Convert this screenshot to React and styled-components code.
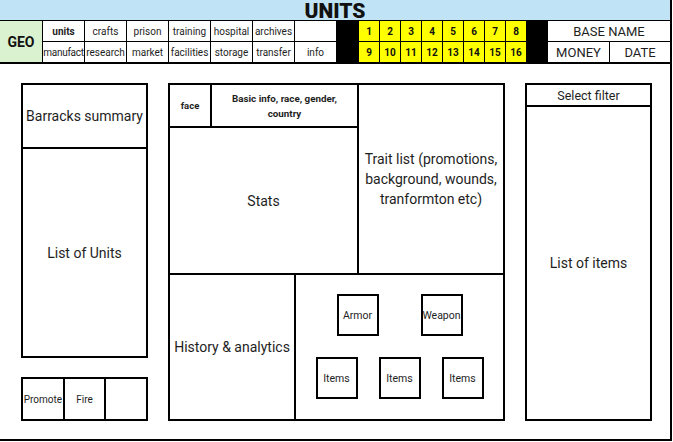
import React from "react";
import styled, { createGlobalStyle } from "styled-components";

const GlobalStyle = createGlobalStyle`
  html, body {
    margin: 0;
    padding: 0;
    background: #fff;
  }
  body {
    font-family: Roboto, "Liberation Sans", sans-serif;
    color: #1e1e1e;
  }
`;

const NAV_TOP = ["units", "crafts", "prison", "training", "hospital", "archives", ""];
const NAV_BOTTOM = ["manufact", "research", "market", "facilities", "storage", "transfer", "info"];

const App = () => {
  return (
    <>
      <GlobalStyle />
      <Sheet>
        <TitleBar>
          <Title>UNITS</Title>
        </TitleBar>

        <HeaderGrid>
          <GeoCell>GEO</GeoCell>
          {NAV_TOP.map((label, i) => (
            <NavCell key={"t" + i} $row={1} $col={i + 2} $bold={label === "units"}>
              {label}
            </NavCell>
          ))}
          {NAV_BOTTOM.map((label, i) => (
            <NavCell key={"b" + i} $row={2} $col={i + 2} $tight={label === "manufact"}>
              {label}
            </NavCell>
          ))}
          <BlackCell $col={9} />
          {Array.from({ length: 16 }, (_, i) => (
            <SlotCell key={i} $row={i < 8 ? 1 : 2} $col={10 + (i % 8)}>
              {i + 1}
            </SlotCell>
          ))}
          <BlackCell $col={18} />
          <InfoCell $row={1} $col="19 / span 2">BASE NAME</InfoCell>
          <InfoCell $row={2} $col="19">MONEY</InfoCell>
          <InfoCell $row={2} $col="20">DATE</InfoCell>
        </HeaderGrid>

        <Main>
          <LeftColumn>
            <UnitsPanel>
              <Cell $size={14}>Barracks summary</Cell>
              <Cell $size={14}>List of Units</Cell>
            </UnitsPanel>
            <ActionRow>
              <Cell $size={10}>Promote</Cell>
              <Cell $size={10}>Fire</Cell>
              <Cell />
            </ActionRow>
          </LeftColumn>

          <DetailPanel>
            <Cell $area="face" $size={9.5} $bold>face</Cell>
            <Cell $area="basic" $size={9.8} $bold $lh={15}>
              Basic info, race, gender,
              <br />
              country
            </Cell>
            <Cell $area="trait" $size={14} $lh={20}>
              Trait list (promotions,
              <br />
              background, wounds,
              <br />
              tranformton etc)
            </Cell>
            <Cell $area="stats" $size={14}>Stats</Cell>
            <Cell $area="history" $size={14}>History &amp; analytics</Cell>
            <EquipArea>
              <SlotRow $gap={42}>
                <ItemBox>Armor</ItemBox>
                <ItemBox>Weapon</ItemBox>
              </SlotRow>
              <SlotRow $gap={21}>
                <ItemBox>Items</ItemBox>
                <ItemBox>Items</ItemBox>
                <ItemBox>Items</ItemBox>
              </SlotRow>
            </EquipArea>
          </DetailPanel>

          <ItemsPanel>
            <Cell $size={12.5}>Select filter</Cell>
            <Cell $size={14}>List of items</Cell>
          </ItemsPanel>
        </Main>
      </Sheet>
    </>
  );
};

const Sheet = styled.div`
  width: 672px;
  height: 441px;
  box-sizing: border-box;
  border-right: 2px solid #000;
  border-bottom: 2px solid #000;
  display: flex;
  flex-direction: column;
  overflow: hidden;
`;

const TitleBar = styled.div`
  height: 20px;
  background: #c0e4f5;
  display: flex;
  justify-content: center;
  align-items: flex-end;
`;

const Title = styled.span`
  font-weight: 900;
  font-size: 21px;
  line-height: 17px;
  color: #111;
`;

const HeaderGrid = styled.div`
  display: grid;
  grid-template-columns: 42px repeat(7, 41px) 21px repeat(8, 20px) 20px 61px 60px;
  grid-template-rows: 20px 20px;
  gap: 1px;
  padding: 1px 0 2px;
  background: #000;
`;

const BaseCell = styled.div`
  display: flex;
  align-items: center;
  justify-content: center;
  background: #fff;
  white-space: nowrap;
  overflow: hidden;
`;

const GeoCell = styled(BaseCell)`
  grid-row: 1 / span 2;
  grid-column: 1;
  background: #daf2d0;
  font-weight: 700;
  font-size: 14px;
  color: #111;
`;

const NavCell = styled(BaseCell)`
  grid-row: ${(p) => p.$row};
  grid-column: ${(p) => p.$col};
  font-size: 10px;
  font-weight: ${(p) => (p.$bold ? 700 : 400)};
  letter-spacing: ${(p) => (p.$tight ? "-0.3px" : "normal")};
`;

const BlackCell = styled.div`
  grid-row: 1 / span 2;
  grid-column: ${(p) => p.$col};
  background: #000;
`;

const SlotCell = styled(BaseCell)`
  grid-row: ${(p) => p.$row};
  grid-column: ${(p) => p.$col};
  background: #ffff00;
  font-size: 10px;
  font-weight: 700;
  color: #111;
`;

const InfoCell = styled(BaseCell)`
  grid-row: ${(p) => p.$row};
  grid-column: ${(p) => p.$col};
  font-size: 13px;
`;

const Main = styled.div`
  flex: 1;
  display: flex;
  align-items: flex-start;
  gap: 20px;
  padding: 19px 0 0 21px;
`;

const LeftColumn = styled.div`
  width: 127px;
  display: flex;
  flex-direction: column;
  gap: 19px;
`;

const Panel = styled.div`
  display: grid;
  gap: 2px;
  padding: 2px;
  background: #000;
  box-sizing: border-box;
`;

const UnitsPanel = styled(Panel)`
  height: 275px;
  grid-template-rows: 62px 1fr;
`;

const ActionRow = styled(Panel)`
  height: 44px;
  grid-template-columns: 1fr 1fr 1fr;
`;

const DetailPanel = styled(Panel)`
  width: 337px;
  height: 338px;
  grid-template-columns: 40px 82px 61px 1fr;
  grid-template-rows: 41px 145px 1fr;
  grid-template-areas:
    "face basic basic trait"
    "stats stats stats trait"
    "history history equip equip";
`;

const ItemsPanel = styled(Panel)`
  width: 127px;
  height: 338px;
  grid-template-rows: 20px 1fr;
`;

const Cell = styled(BaseCell)`
  grid-area: ${(p) => p.$area || "auto"};
  font-size: ${(p) => p.$size || 12}px;
  font-weight: ${(p) => (p.$bold ? 700 : 400)};
  line-height: ${(p) => (p.$lh ? p.$lh + "px" : "normal")};
  text-align: center;
  overflow: visible;
`;

const EquipArea = styled.div`
  grid-area: equip;
  background: #fff;
  display: flex;
  flex-direction: column;
  align-items: center;
  gap: 21px;
  padding-top: 19px;
`;

const SlotRow = styled.div`
  display: flex;
  gap: ${(p) => p.$gap}px;
`;

const ItemBox = styled.div`
  width: 42px;
  height: 42px;
  box-sizing: border-box;
  border: 2px solid #000;
  display: flex;
  align-items: center;
  justify-content: center;
  font-size: 10.5px;
  white-space: nowrap;
`;

export default App;
